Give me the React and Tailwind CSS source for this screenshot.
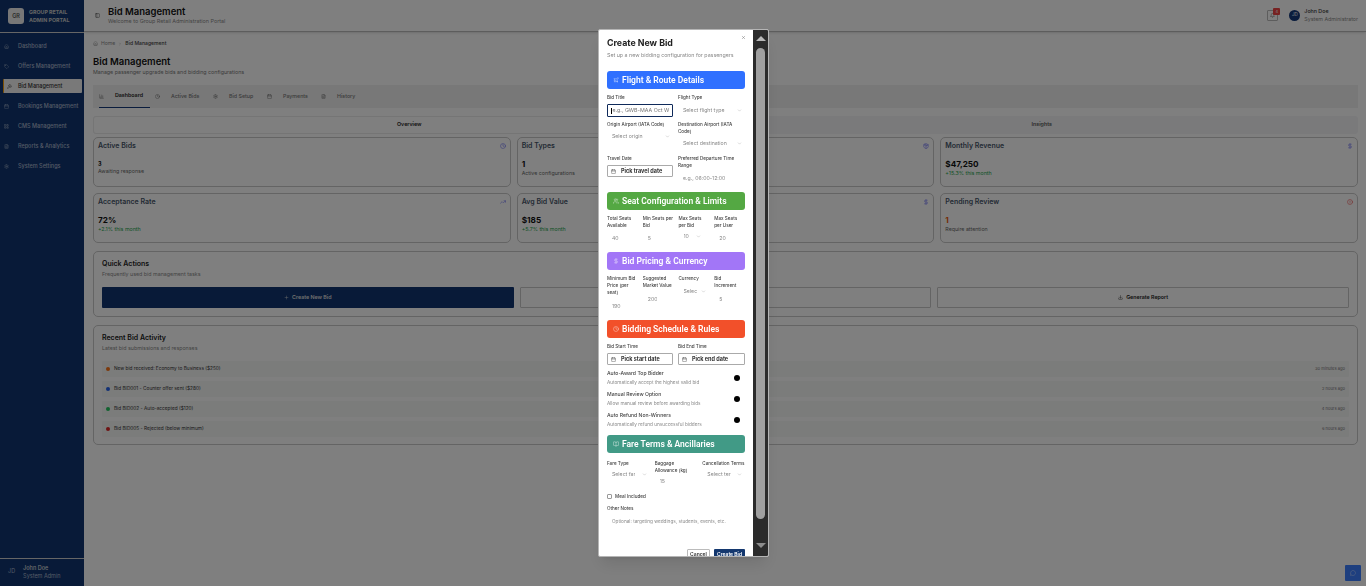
import React from "react";
import {
  BarChart3,
  Bell,
  BookOpen,
  Calendar,
  CircleAlert,
  Clock,
  DollarSign,
  FileText,
  Gavel,
  Home,
  MessageCircle,
  PanelLeft,
  Plus,
  Settings,
  Tag,
  TrendingUp,
  Users,
  X,
  ChevronDown,
  ChevronRight,
  Plane,
  Download,
  Package,
  LayoutGrid,
} from "lucide-react";

const navItems = [
  { label: "Dashboard", icon: Home },
  { label: "Offers Management", icon: Tag },
  { label: "Bid Management", icon: Gavel, active: true },
  { label: "Bookings Management", icon: Calendar },
  { label: "CMS Management", icon: LayoutGrid },
  { label: "Reports & Analytics", icon: FileText },
  { label: "System Settings", icon: Settings },
];

const tabs = [
  { label: "Dashboard", icon: BarChart3, active: true, w: "w-[51px]", mr: "mr-[5px]" },
  { label: "Active Bids", icon: Clock, w: "w-[58px]" },
  { label: "Bid Setup", icon: Settings, w: "w-[54px]" },
  { label: "Payments", icon: Calendar, w: "w-[54px]" },
  { label: "History", icon: FileText, w: "w-[40px]" },
];

const activity = [
  { dot: "bg-[#f97316]", text: "New bid received: Economy to Business ($250)", time: "30 minutes ago" },
  { dot: "bg-[#2563eb]", text: "Bid BID001 - Counter offer sent ($280)", time: "2 hours ago" },
  { dot: "bg-[#22c55e]", text: "Bid BID002 - Auto-accepted ($120)", time: "4 hours ago" },
  { dot: "bg-[#dc2626]", text: "Bid BID005 - Rejected (below minimum)", time: "6 hours ago" },
];

const bigValue = "mt-[9px] text-[8.2px] leading-[11px] font-bold";

function StatCard({ title, icon: Icon, iconClass, value, valueClass, note, noteClass }) {
  return (
    <div className="h-[50px] rounded-[5px] border border-[#c8c8c8] px-[4px] pt-[3px]">
      <div className="flex items-center justify-between">
        <span className="text-[7px] leading-[9px] font-semibold text-[#475569]">{title}</span>
        <Icon className={`size-[6px] ${iconClass}`} />
      </div>
      <div className={valueClass}>{value}</div>
      <div className={`text-[5.3px] leading-[7px] ${noteClass}`}>{note}</div>
    </div>
  );
}

function SectionHeader({ color, icon: Icon, children }) {
  return (
    <div className={`flex h-[18px] items-center rounded-[3px] px-[6px] ${color}`}>
      <Icon className="mr-[3px] size-[6px] text-white/70" />
      <span className="text-[8.5px] font-semibold text-white" style={{ fontFamily: "Roboto, sans-serif" }}>{children}</span>
    </div>
  );
}

function Label({ children, className = "" }) {
  return <div className={`text-[4.6px] leading-[7px] font-medium text-[#444] ${className}`}>{children}</div>;
}

function Ghost({ children, chevron, className = "" }) {
  return (
    <div className={`flex items-center justify-between px-[5px] text-[5.2px] leading-[7px] text-[#888] ${className}`}>
      <span className="overflow-hidden whitespace-nowrap">{children}</span>
      {chevron && <ChevronDown className="size-[5px] shrink-0 text-[#aaa]" />}
    </div>
  );
}

function DateButton({ children }) {
  return (
    <div className="flex h-[12px] items-center rounded-[1px] border border-[#aaa] px-[3px] text-[5.5px] font-bold text-[#333]">
      <Calendar className="mr-[5px] size-[5px] text-[#444]" />
      {children}
    </div>
  );
}

function SwitchRow({ title, desc }) {
  return (
    <div className="flex h-[21px] items-center justify-between pr-[5px]">
      <div>
        <div className="text-[5.1px] leading-[7px] font-medium text-[#444]">{title}</div>
        <div className="mt-[2px] text-[4.7px] leading-[6px] text-[#888]">{desc}</div>
      </div>
      <span className="size-[6px] rounded-full bg-black" />
    </div>
  );
}

function BidModal() {
  return (
    <div className="fixed top-[29px] left-[598px] flex h-[528px] w-[171px] overflow-hidden rounded-[2px] border border-[#b5b5b5] bg-white shadow-lg">
      <div className="relative flex-1 overflow-hidden pt-[6px] pr-[8px] pl-[8px]">
        <X className="absolute top-[5px] right-[7px] size-[5px] text-[#666]" />
        <div className="text-[8.8px] leading-[13px] font-bold text-[#222]">Create New Bid</div>
        <div className="mt-[3px] text-[5.3px] leading-[7px] text-[#888]">Set up a new bidding configuration for passengers</div>

        <div className="mt-[12px]">
          <SectionHeader color="bg-[#2f70ff]" icon={Plane}>Flight &amp; Route Details</SectionHeader>
        </div>
        <div className="mt-[5px] grid grid-cols-[66px_67px] gap-x-[5px]">
          <div>
            <Label>Bid Title</Label>
            <div className="mt-[3px] flex h-[13px] items-center overflow-hidden rounded-[1px] border-[1.5px] border-[#0f2a5a] px-[3px] text-[5.3px] whitespace-nowrap text-[#777]">
              <span className="mr-[0.5px] h-[6px] w-px shrink-0 bg-black" />e.g., GWB-MAA Oct W
            </div>
          </div>
          <div>
            <Label>Flight Type</Label>
            <Ghost chevron className="mt-[6px] pr-[3px]">Select flight type</Ghost>
          </div>
          <div className="mt-[4px]">
            <Label>Origin Airport (IATA Code)</Label>
            <Ghost chevron className="mt-[5px] pr-[3px]">Select origin</Ghost>
          </div>
          <div className="mt-[4px]">
            <Label>Destination Airport (IATA Code)</Label>
            <Ghost chevron className="mt-[5px] pr-[3px]">Select destination</Ghost>
          </div>
          <div className="mt-[8px]">
            <Label>Travel Date</Label>
            <div className="mt-[3px]"><DateButton>Pick travel date</DateButton></div>
          </div>
          <div className="mt-[8px]">
            <Label>Preferred Departure Time Range</Label>
            <Ghost className="mt-[6px]">e.g., 06:00-12:00</Ghost>
          </div>
        </div>

        <div className="mt-[10px]">
          <SectionHeader color="bg-[#54a843]" icon={Users}>Seat Configuration &amp; Limits</SectionHeader>
        </div>
        <div className="mt-[5px] grid grid-cols-4 gap-x-[5px]">
          <div><Label>Total Seats Available</Label><Ghost className="mt-[6px]">40</Ghost></div>
          <div><Label>Min Seats per Bid</Label><Ghost className="mt-[6px]">5</Ghost></div>
          <div><Label>Max Seats per Bid</Label><Ghost chevron className="mt-[4px] pr-[8px]">10</Ghost></div>
          <div><Label>Max Seats per User</Label><Ghost className="mt-[6px]">20</Ghost></div>
        </div>

        <div className="mt-[10px]">
          <SectionHeader color="bg-[#a276f7]" icon={DollarSign}>Bid Pricing &amp; Currency</SectionHeader>
        </div>
        <div className="mt-[5px] grid grid-cols-4 gap-x-[5px]">
          <div><Label>Minimum Bid Price (per seat)</Label><Ghost className="mt-[7px]">190</Ghost></div>
          <div><Label>Suggested Market Value</Label><Ghost className="mt-[7px]">200</Ghost></div>
          <div><Label>Currency</Label><Ghost chevron className="mt-[6px] pr-[3px]">Selec</Ghost></div>
          <div><Label>Bid<br />Increment</Label><Ghost className="mt-[7px]">5</Ghost></div>
        </div>

        <div className="mt-[10px]">
          <SectionHeader color="bg-[#f2502a]" icon={Clock}>Bidding Schedule &amp; Rules</SectionHeader>
        </div>
        <div className="mt-[5px] grid grid-cols-[66px_67px] gap-x-[5px]">
          <div><Label>Bid Start Time</Label><div className="mt-[3px]"><DateButton>Pick start date</DateButton></div></div>
          <div><Label>Bid End Time</Label><div className="mt-[3px]"><DateButton>Pick end date</DateButton></div></div>
        </div>
        <div className="mt-[2px]">
          <SwitchRow title="Auto-Award Top Bidder" desc="Automatically accept the highest valid bid" />
          <SwitchRow title="Manual Review Option" desc="Allow manual review before awarding bids" />
          <SwitchRow title="Auto Refund Non-Winners" desc="Automatically refund unsuccessful bidders" />
        </div>

        <div className="mt-[5px]">
          <SectionHeader color="bg-[#419a86]" icon={BookOpen}>Fare Terms &amp; Ancillaries</SectionHeader>
        </div>
        <div className="mt-[7px] grid grid-cols-3 gap-x-[5px]">
          <div><Label>Fare Type</Label><Ghost chevron className="mt-[4px] pr-[3px]">Select far</Ghost></div>
          <div><Label>Baggage Allowance (kg)</Label><Ghost className="mt-[4px]">15</Ghost></div>
          <div><Label className="whitespace-nowrap">Cancellation Terms</Label><Ghost chevron className="mt-[4px] pr-[3px]">Select ter</Ghost></div>
        </div>
        <div className="mt-[8px] flex items-center">
          <span className="mr-[3px] size-[5px] rounded-[1px] border border-[#999]" />
          <Label>Meal Included</Label>
        </div>
        <Label className="mt-[5px]">Other Notes</Label>
        <div className="mt-[6px] px-[5px] text-[4.7px] leading-[7px] text-[#888]">Optional: targeting weddings, students, events, etc.</div>

        <div className="mt-[24px] flex justify-end gap-[4px]">
          <div className="flex h-[12px] w-[23px] items-center justify-center rounded-[1px] border border-[#bbb] text-[5px] font-semibold text-[#333]">Cancel</div>
          <div className="flex h-[12px] w-[31px] items-center justify-center rounded-[1px] bg-[#14386f] text-[5px] font-semibold text-white">Create Bid</div>
        </div>
      </div>

      <div className="flex w-[15px] shrink-0 flex-col items-center bg-[#2b2b2b] pt-[6px] pb-[8px]">
        <span className="h-0 w-0 border-x-[5px] border-b-[5px] border-x-transparent border-b-[#b8b8b8]" />
        <div className="mt-[7px] w-[9px] flex-1 rounded-full bg-[#a0a0a0]" />
        <span className="mt-[24px] h-0 w-0 border-x-[5px] border-t-[5px] border-x-transparent border-t-[#8c8c8c]" />
      </div>
    </div>
  );
}

export default function App() {
  return (
    <div className="relative flex h-[586px] w-[1366px] overflow-hidden bg-white" style={{ fontFamily: "Inter, sans-serif" }}>
      <aside className="flex w-[84px] shrink-0 flex-col bg-[#103570]">
        <div className="flex h-[33px] items-center border-b border-[#ccc] pl-[8px]">
          <div className="flex size-[16px] items-center justify-center rounded-[3px] bg-[#eeeeee] text-[5.5px] font-semibold text-[#555]">GR</div>
          <div className="ml-[5px] text-[5.3px] leading-[8px] font-bold text-[#c8c8c8]">
            GROUP RETAIL
            <br />
            ADMIN PORTAL
          </div>
        </div>
        <nav className="mt-[3px] flex flex-col">
          {navItems.map((item) =>
            item.active ? (
              <div key={item.label} className="mx-[3px] my-[3px] flex h-[14px] w-[79px] items-center rounded-[1px] border-l border-[#f59e0b] bg-[#f2f2f2] pl-[3px] text-[5.5px] font-medium text-[#333]">
                <item.icon className="mr-[6px] size-[5px]" />
                {item.label}
              </div>
            ) : (
              <div key={item.label} className="flex h-[20px] items-center pl-[4px] text-[5.5px] font-medium text-[#a8b4cc]">
                <item.icon className="mr-[9px] size-[5px]" />
                {item.label}
              </div>
            )
          )}
        </nav>
        <div className="mt-auto flex h-[28px] items-center border-t border-[#ccc] pb-[2px] pl-[8px]">
          <span className="mr-[8px] text-[5.5px] text-[#a8b4cc]">JD</span>
          <div className="text-[5.5px] leading-[8px]">
            <div className="font-medium text-[#ddd]">John Doe</div>
            <div className="text-[#a8b4cc]">System Admin</div>
          </div>
        </div>
      </aside>

      <div className="flex min-w-0 flex-1 flex-col">
        <header className="flex h-[32px] items-center justify-between border-b border-[#bbb] pr-[8px] pl-[11px] shadow-sm">
          <div className="flex items-center">
            <PanelLeft className="mr-[8px] size-[5px] text-[#333]" />
            <div>
              <div className="text-[9.5px] leading-[12px] font-semibold text-[#111]">Bid Management</div>
              <div className="text-[5.4px] leading-[7px] text-[#888]">Welcome to Group Retail Administration Portal</div>
            </div>
          </div>
          <div className="flex items-center">
            <div className="relative mr-[11px] flex size-[11px] items-center justify-center rounded-[1px] border border-[#bbb]">
              <Bell className="size-[5px] text-[#555]" />
              <span className="absolute -top-[3px] -right-[3px] flex size-[7px] items-center justify-center rounded-[1px] bg-[#ef4444] text-[4px] text-white">4</span>
            </div>
            <div className="mr-[4px] flex size-[11px] items-center justify-center rounded-full bg-[#14387a] text-[4.5px] text-white">JD</div>
            <div className="pb-[2px] text-[5.3px] leading-[8px]">
              <div className="font-medium text-[#333]">John Doe</div>
              <div className="text-[#888]">System Administrator</div>
            </div>
          </div>
        </header>

        <main className="flex flex-col pr-[8px] pl-[9px]">
          <div className="mt-[8px] flex h-[7px] items-center text-[5.1px] text-[#888]">
            <Home className="mr-[3px] size-[5px]" />
            Home
            <ChevronRight className="mx-[3px] size-[4px]" />
            <span className="font-medium text-[#444]">Bid Management</span>
          </div>
          <div className="mt-[8px] text-[9.5px] leading-[14px] font-semibold text-[#111]">Bid Management</div>
          <div className="text-[5.3px] leading-[7px] text-[#777]">Manage passenger upgrade bids and bidding configurations</div>

          <div className="mt-[9px] flex h-[23px] bg-[#f1f1f1] pl-[6px]">
            {tabs.map((tab) => (
              <div key={tab.label} className={`flex items-center ${tab.w} ${tab.mr || ""} ${tab.active ? "border-b border-[#14387a]" : ""}`}>
                <tab.icon className="mr-[11px] size-[5px] shrink-0 text-[#666]" />
                <span className={`text-[5.3px] whitespace-nowrap ${tab.active ? "font-semibold text-[#222]" : "font-medium text-[#777]"}`}>{tab.label}</span>
              </div>
            ))}
          </div>

          <div className="mt-[8px] grid h-[18px] grid-cols-2 rounded-[3px] bg-[#f4f5f7]">
            <div className="flex items-center justify-center rounded-[3px] border border-[#eaeaea] bg-white text-[5.3px] font-semibold text-[#222]">Overview</div>
            <div className="flex items-center justify-center text-[5.3px] font-semibold text-[#555]">Insights</div>
          </div>

          <div className="mt-[3px] grid grid-cols-3 gap-x-[6px] gap-y-[6px]">
            <StatCard title="Active Bids" icon={Clock} iconClass="text-[#6366f1]" value="3" valueClass="mt-[11px] text-[5.5px] leading-[7px] font-bold text-[#111]" note="Awaiting response" noteClass="text-[#666]" />
            <StatCard title="Bid Types" icon={Package} iconClass="text-[#6366f1]" value="1" valueClass={`${bigValue} text-[#111]`} note="Active configurations" noteClass="text-[#666]" />
            <StatCard title="Monthly Revenue" icon={DollarSign} iconClass="text-[#6366f1]" value="$47,250" valueClass={`${bigValue} text-[#111]`} note="+15.3% this month" noteClass="text-[#22a34a]" />
            <StatCard title="Acceptance Rate" icon={TrendingUp} iconClass="text-[#6366f1]" value="72%" valueClass={`${bigValue} text-[#111]`} note="+2.1% this month" noteClass="text-[#22a34a]" />
            <StatCard title="Avg Bid Value" icon={DollarSign} iconClass="text-[#6366f1]" value="$185" valueClass={`${bigValue} text-[#111]`} note="+5.7% this month" noteClass="text-[#22a34a]" />
            <StatCard title="Pending Review" icon={CircleAlert} iconClass="text-[#ef4444]" value="1" valueClass={`${bigValue} text-[#ea580c]`} note="Require attention" noteClass="text-[#666]" />
          </div>

          <section className="mt-[8px] h-[66px] rounded-[5px] border border-[#c8c8c8] px-[8px] pt-[7px]">
            <div className="text-[7px] leading-[9px] font-semibold text-[#222]">Quick Actions</div>
            <div className="mt-[3px] text-[5.3px] leading-[7px] text-[#888]">Frequently used bid management tasks</div>
            <div className="mt-[9px] grid grid-cols-3 gap-x-[6px]">
              <div className="flex h-[21px] items-center justify-center rounded-[1px] bg-[#103570] text-[5.3px] font-semibold text-[#ddd]">
                <Plus className="mr-[3px] size-[5px]" />
                Create New Bid
              </div>
              <div className="h-[21px] rounded-[1px] border border-[#c8c8c8]" />
              <div className="flex h-[21px] items-center justify-center rounded-[1px] border border-[#c8c8c8] text-[5.3px] font-semibold text-[#222]">
                <Download className="mr-[3px] size-[5px]" />
                Generate Report
              </div>
            </div>
          </section>

          <section className="mt-[8px] h-[120px] rounded-[5px] border border-[#c8c8c8] px-[8px] pt-[7px]">
            <div className="text-[7px] leading-[9px] font-semibold text-[#222]">Recent Bid Activity</div>
            <div className="mt-[3px] text-[5.3px] leading-[7px] text-[#888]">Latest bid submissions and responses</div>
            <div className="mt-[9px] flex flex-col gap-[4px]">
              {activity.map((row) => (
                <div key={row.text} className="flex h-[16px] items-center justify-between rounded-[1px] bg-[#f6f8f7] pr-[4px] pl-[4px]">
                  <div className="flex items-center">
                    <span className={`mr-[4px] size-[4px] rounded-full ${row.dot}`} />
                    <span className="text-[4.75px] text-[#333]">{row.text}</span>
                  </div>
                  <span className="text-[4.1px] text-[#777]">{row.time}</span>
                </div>
              ))}
            </div>
          </section>
        </main>
      </div>

      <div className="fixed right-[5px] bottom-[5px] flex size-[16px] items-center justify-center rounded-[1px] bg-[#3c7eff]">
        <MessageCircle className="size-[6px] text-white/70" />
      </div>

      <div className="fixed inset-0 bg-black/50" />
      <BidModal />
    </div>
  );
}
